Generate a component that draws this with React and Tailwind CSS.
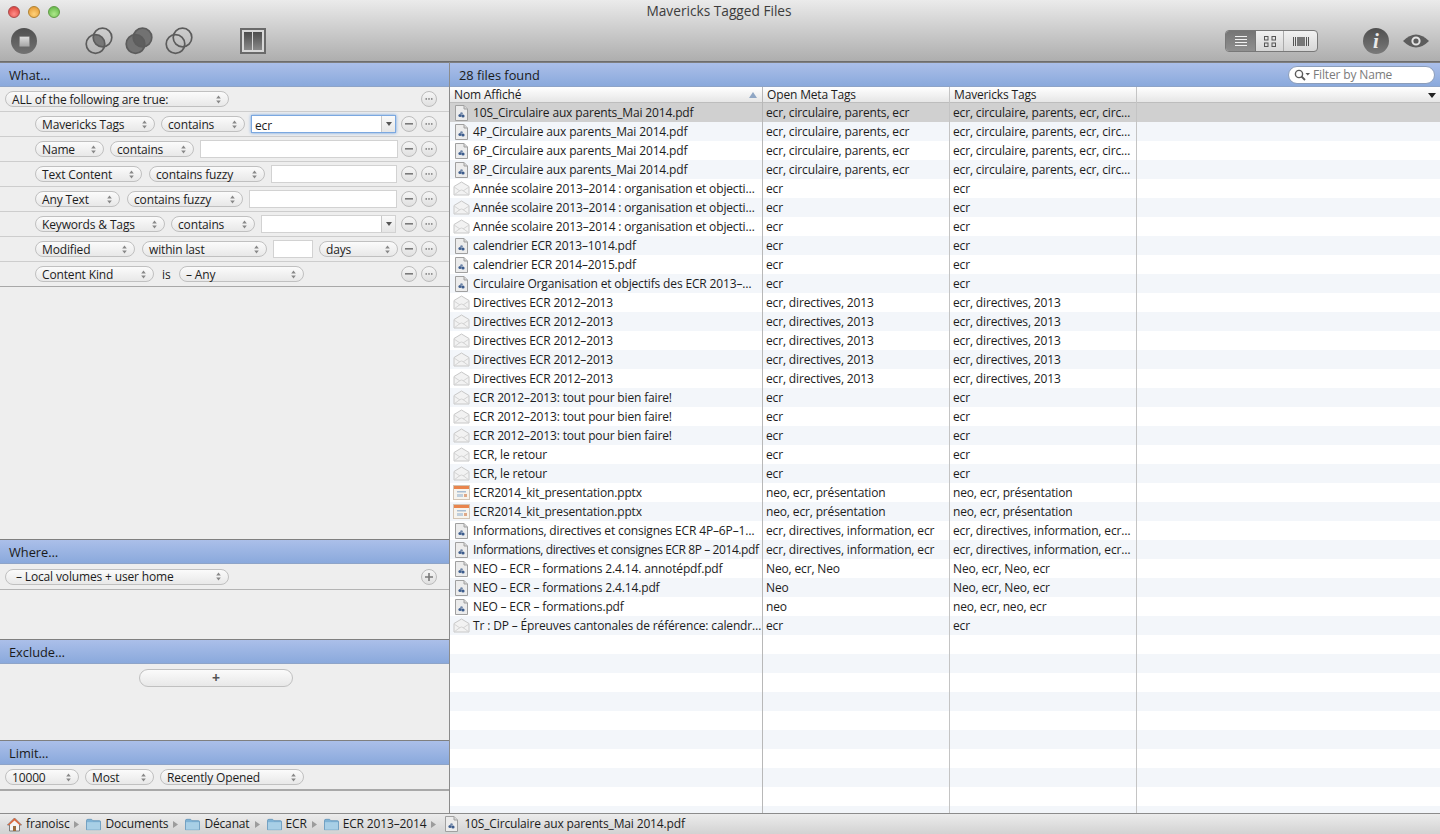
import React from 'react';

const FONT = "font-['Open_Sans',sans-serif]";
const TXT = "text-[12px] tracking-[-0.15px] leading-[14px] text-[#1c1c1c]";

const files = [
  ['pdf', '10S_Circulaire aux parents_Mai 2014.pdf', 'ecr, circulaire, parents, ecr', 'ecr, circulaire, parents, ecr, circ…'],
  ['pdf', '4P_Circulaire aux parents_Mai 2014.pdf', 'ecr, circulaire, parents, ecr', 'ecr, circulaire, parents, ecr, circ…'],
  ['pdf', '6P_Circulaire aux parents_Mai 2014.pdf', 'ecr, circulaire, parents, ecr', 'ecr, circulaire, parents, ecr, circ…'],
  ['pdf', '8P_Circulaire aux parents_Mai 2014.pdf', 'ecr, circulaire, parents, ecr', 'ecr, circulaire, parents, ecr, circ…'],
  ['mail', 'Année scolaire 2013–2014 : organisation et objecti…', 'ecr', 'ecr'],
  ['mail', 'Année scolaire 2013–2014 : organisation et objecti…', 'ecr', 'ecr'],
  ['mail', 'Année scolaire 2013–2014 : organisation et objecti…', 'ecr', 'ecr'],
  ['pdf', 'calendrier ECR 2013–1014.pdf', 'ecr', 'ecr'],
  ['pdf', 'calendrier ECR 2014–2015.pdf', 'ecr', 'ecr'],
  ['pdf', 'Circulaire Organisation et objectifs des ECR 2013–…', 'ecr', 'ecr'],
  ['mail', 'Directives ECR 2012–2013', 'ecr, directives, 2013', 'ecr, directives, 2013'],
  ['mail', 'Directives ECR 2012–2013', 'ecr, directives, 2013', 'ecr, directives, 2013'],
  ['mail', 'Directives ECR 2012–2013', 'ecr, directives, 2013', 'ecr, directives, 2013'],
  ['mail', 'Directives ECR 2012–2013', 'ecr, directives, 2013', 'ecr, directives, 2013'],
  ['mail', 'Directives ECR 2012–2013', 'ecr, directives, 2013', 'ecr, directives, 2013'],
  ['mail', 'ECR 2012–2013: tout pour bien faire!', 'ecr', 'ecr'],
  ['mail', 'ECR 2012–2013: tout pour bien faire!', 'ecr', 'ecr'],
  ['mail', 'ECR 2012–2013: tout pour bien faire!', 'ecr', 'ecr'],
  ['mail', 'ECR, le retour', 'ecr', 'ecr'],
  ['mail', 'ECR, le retour', 'ecr', 'ecr'],
  ['ppt', 'ECR2014_kit_presentation.pptx', 'neo, ecr, présentation', 'neo, ecr, présentation'],
  ['ppt', 'ECR2014_kit_presentation.pptx', 'neo, ecr, présentation', 'neo, ecr, présentation'],
  ['pdf', 'Informations, directives et consignes ECR 4P–6P–1…', 'ecr, directives, information, ecr', 'ecr, directives, information, ecr…'],
  ['pdf', 'Informations, directives et consignes ECR 8P – 2014.pdf', 'ecr, directives, information, ecr', 'ecr, directives, information, ecr…'],
  ['pdf', 'NEO – ECR – formations 2.4.14. annotépdf.pdf', 'Neo, ecr, Neo', 'Neo, ecr, Neo, ecr'],
  ['pdf', 'NEO – ECR – formations 2.4.14.pdf', 'Neo', 'Neo, ecr, Neo, ecr'],
  ['pdf', 'NEO – ECR – formations.pdf', 'neo', 'neo, ecr, neo, ecr'],
  ['mail', 'Tr : DP – Épreuves cantonales de référence: calendr…', 'ecr', 'ecr'],
];

function FileIcon({ kind }) {
  if (kind === 'mail') {
    return (
      <svg width="17" height="15" viewBox="0 0 17 15" className="shrink-0">
        <path d="M1 5.5 L8.5 1 L16 5.5 V14 H1 Z" fill="#f2f2f2" stroke="#c8c8c8" />
        <path d="M1 6 L7 10 M16 6 L10 10 M1 14 L7 9.5 Q8.5 8.5 10 9.5 L16 14" fill="none" stroke="#d4d4d4" />
      </svg>
    );
  }
  if (kind === 'ppt') {
    return (
      <svg width="17" height="15" viewBox="0 0 17 15" className="shrink-0">
        <rect x="0.5" y="0.5" width="16" height="14" fill="#f7f4ee" stroke="#d3c4b4" />
        <rect x="1" y="1" width="15" height="3" fill="#e9854d" />
        <rect x="4" y="6" width="9" height="1.5" fill="#a9bdd2" />
        <rect x="4" y="9" width="6" height="3" fill="#c0cfdd" />
        <rect x="11" y="9" width="3" height="3" fill="#dfa988" />
      </svg>
    );
  }
  return (
    <svg width="13" height="16" viewBox="0 0 13 16" className="shrink-0 ml-[2px] mr-[2px]">
      <path d="M0.5 0.5 H9 L12.5 4 V15.5 H0.5 Z" fill="#ececec" stroke="#a0a0a0" />
      <path d="M9 0.5 V4 H12.5" fill="#d6d6d6" stroke="#a0a0a0" />
      <circle cx="5" cy="10.5" r="1.6" fill="#41608f" />
      <circle cx="8" cy="11" r="1.6" fill="#3b5b8c" />
      <circle cx="6.5" cy="8.5" r="1.3" fill="#6f86a8" />
    </svg>
  );
}

function Updown() {
  return (
    <svg width="5" height="9" viewBox="0 0 5 9" className="shrink-0">
      <path d="M2.5 0.5 L4.8 3.5 H0.2 Z M2.5 8.5 L4.8 5.5 H0.2 Z" fill="#888" />
    </svg>
  );
}

function Pill({ w, label, ml = '', pl = 'pl-[6px]' }) {
  return (
    <div className={`${w} ${ml} ${pl} ${TXT} h-[16px] shrink-0 rounded-full border border-[#c0c0c0] bg-gradient-to-b from-[#fbfbfb] to-[#e8e8e8] flex items-center justify-between pr-[7px]`}>
      <span className="whitespace-nowrap pt-[1px]">{label}</span>
      <Updown />
    </div>
  );
}

function Field({ w, ml, value, combo, focus }) {
  return (
    <div className={`${w} ${ml} ${TXT} h-[18px] shrink-0 bg-white flex items-center ${focus ? 'border border-[#7ba8e0] shadow-[0_0_3px_#6b9ee0]' : 'border border-[#d2d2d2]'}`}>
      <span className="flex-1 pl-[3px] pt-[3px]">{value}</span>
      {combo && (
        <span className="w-[14px] h-full border-l border-[#c8c8c8] bg-gradient-to-b from-[#fafafa] to-[#e6e6e6] flex items-center justify-center">
          <svg width="6" height="4" viewBox="0 0 6 4"><path d="M0 0 H6 L3 4 Z" fill="#555" /></svg>
        </span>
      )}
    </div>
  );
}

function RoundBtn({ glyph, className = '' }) {
  return (
    <div className={`w-[16px] h-[16px] shrink-0 rounded-full border border-[#bcbcbc] bg-gradient-to-b from-[#f6f6f6] to-[#e0e0e0] flex items-center justify-center ${className}`}>
      <svg width="10" height="10" viewBox="0 0 10 10">
        {glyph === 'minus' && <rect x="1" y="4" width="8" height="1.6" fill="#7a7a7a" />}
        {glyph === 'more' && (
          <g fill="#7a7a7a">
            <rect x="1.5" y="4.2" width="1.5" height="1.5" />
            <rect x="4.25" y="4.2" width="1.5" height="1.5" />
            <rect x="7" y="4.2" width="1.5" height="1.5" />
          </g>
        )}
        {glyph === 'plus' && <path d="M1 4.2 H4.2 V1 H5.8 V4.2 H9 V5.8 H5.8 V9 H4.2 V5.8 H1 Z" fill="#7a7a7a" />}
      </svg>
    </div>
  );
}

function CriteriaRow({ children, last, controls = true }) {
  return (
    <div className={`h-[25px] pl-[35px] flex items-center border-b ${last ? 'border-[#a8a8a8]' : 'border-[#cdcdcd]'}`}>
      {children}
      <div className="ml-auto pr-[12px] flex gap-[4px]">
        {controls && <RoundBtn glyph="minus" />}
        <RoundBtn glyph="more" />
      </div>
    </div>
  );
}

function SectionHeader({ title }) {
  return (
    <div className="h-[25px] shrink-0 border-t border-[#7f7f7f] border-b border-b-[#8ea4c8] bg-gradient-to-b from-[#abbfe9] to-[#8aa9dc] pl-[9px] pt-[1px] flex items-center text-[12.8px] text-[#1a1a1a] leading-[16px]">
      {title}
    </div>
  );
}

function Circles({ fill }) {
  const lens = 'M8.57 7.9 A9.3 9.3 0 0 1 19.43 19.6 A9.3 9.3 0 0 1 8.57 7.9 Z';
  return (
    <svg width="28" height="28" viewBox="0 0 28 28">
      {fill === 'all' && <circle cx="10.5" cy="17" r="9.3" fill="#727272" />}
      {fill === 'all' && <circle cx="17.5" cy="10.5" r="9.3" fill="#727272" />}
      {fill === 'all' && <path d={lens} fill="#5e5e5e" />}
      {fill === 'mid' && <path d={lens} fill="#777" />}
      <circle cx="10.5" cy="17" r="9.3" fill="none" stroke="#5c5c5c" strokeWidth="1.7" />
      <circle cx="17.5" cy="10.5" r="9.3" fill="none" stroke="#5c5c5c" strokeWidth="1.7" />
    </svg>
  );
}

function Toolbar() {
  return (
    <div className="h-[62px] shrink-0 border-b border-[#6d6d6d] bg-gradient-to-b from-[#ebebeb] to-[#aeaeae] flex flex-col">
      <div className="h-[22px] flex items-center">
        <div className="flex gap-[8px] pl-[8px] pt-[1px]">
          <span className="w-[12px] h-[12px] rounded-full border border-[#a94a4a] bg-[radial-gradient(circle_at_50%_70%,#ff8f8a,#d6332e)]" />
          <span className="w-[12px] h-[12px] rounded-full border border-[#b08230] bg-[radial-gradient(circle_at_50%_70%,#ffd27a,#e0912a)]" />
          <span className="w-[12px] h-[12px] rounded-full border border-[#5f9a45] bg-[radial-gradient(circle_at_50%_70%,#aee88a,#58b03e)]" />
        </div>
        <div className="flex-1 text-center pr-[62px] text-[13.7px] text-[#3c3c3c] leading-[18px]">Mavericks Tagged Files</div>
      </div>
      <div className="flex-1 flex items-center pl-[11px] pr-[11px] pb-[1px]">
        <div className="w-[26px] h-[26px] rounded-full bg-gradient-to-b from-[#505050] to-[#727272] flex items-center justify-center">
          <span className="w-[11px] h-[11px] rounded-[1px] bg-gradient-to-b from-[#dcdcdc] to-[#a8a8a8] border border-[#8a8a8a]" />
        </div>
        <div className="ml-[48px] flex gap-[12px]">
          <Circles fill="mid" />
          <Circles fill="all" />
          <Circles fill="none" />
        </div>
        <div className="ml-[47px] w-[26px] h-[26px] border-[2px] border-[#6a6a6a] bg-[#d8d8d8] flex gap-[1px] p-[2px]">
          <span className="w-[8px] bg-gradient-to-b from-[#4c4c4c] to-[#8a8a8a]" />
          <span className="flex-1 bg-gradient-to-b from-[#4c4c4c] to-[#8a8a8a]" />
        </div>
        <div className="ml-auto w-[93px] h-[22px] rounded-[4px] border border-[#787878] flex overflow-hidden bg-gradient-to-b from-[#f2f2f2] to-[#d6d6d6]">
          <div className="w-[30px] bg-gradient-to-b from-[#757575] to-[#8f8f8f] border-r border-[#777] flex items-center justify-center">
            <svg width="12" height="11" viewBox="0 0 12 11"><path d="M0 .5H12M0 3.5H12M0 6.5H12M0 9.5H12" stroke="#f1f1f1" /></svg>
          </div>
          <div className="w-[28px] border-r border-[#aaa] flex items-center justify-center">
            <svg width="12" height="11" viewBox="0 0 12 11" fill="none" stroke="#555">
              <rect x=".5" y=".5" width="3.5" height="3.5" /><rect x="8" y=".5" width="3.5" height="3.5" />
              <rect x=".5" y="7" width="3.5" height="3.5" /><rect x="8" y="7" width="3.5" height="3.5" />
            </svg>
          </div>
          <div className="flex-1 flex items-center justify-center">
            <svg width="16" height="11" viewBox="0 0 16 11">
              <path d="M.5 1V10M2.5 1V10" stroke="#555" />
              <rect x="4" y="1" width="8" height="9" fill="#777" />
              <path d="M13.5 1V10M15.5 1V10" stroke="#555" />
            </svg>
          </div>
        </div>
        <div className="ml-[45px] w-[26px] h-[26px] rounded-full bg-gradient-to-b from-[#4f4f4f] to-[#7a7a7a] flex items-center justify-center">
          <span className="font-['Liberation_Serif',serif] italic font-bold text-[21px] leading-[22px] text-[#e9e9e9]">i</span>
        </div>
        <svg width="26" height="14" viewBox="0 0 26 14" className="ml-[14px]">
          <path d="M0 7 Q13 -6 26 7 Q13 20 0 7 Z" fill="#5d5d5d" />
          <circle cx="13" cy="7" r="3.6" fill="none" stroke="#e4e4e4" strokeWidth="2" />
        </svg>
      </div>
    </div>
  );
}

function LeftPanel() {
  return (
    <div className="w-[450px] shrink-0 border-r border-[#8c8c8c] bg-[#eeeeee] flex flex-col">
      <SectionHeader title="What…" />
      <div className="h-[25px] pl-[5px] flex items-center border-b border-[#cdcdcd]">
        <Pill w="w-[224px]" label="ALL of the following are true:" />
        <div className="ml-auto pr-[12px]"><RoundBtn glyph="more" /></div>
      </div>
      <CriteriaRow>
        <Pill w="w-[120px]" label="Mavericks Tags" />
        <Pill w="w-[84px]" ml="ml-[6px]" label="contains" />
        <Field w="w-[145px]" ml="ml-[6px]" value="ecr" combo focus />
      </CriteriaRow>
      <CriteriaRow>
        <Pill w="w-[69px]" label="Name" />
        <Pill w="w-[84px]" ml="ml-[6px]" label="contains" />
        <Field w="w-[198px]" ml="ml-[6px]" />
      </CriteriaRow>
      <CriteriaRow>
        <Pill w="w-[107px]" label="Text Content" />
        <Pill w="w-[116px]" ml="ml-[7px]" label="contains fuzzy" />
        <Field w="w-[126px]" ml="ml-[6px]" />
      </CriteriaRow>
      <CriteriaRow>
        <Pill w="w-[85px]" label="Any Text" />
        <Pill w="w-[116px]" ml="ml-[7px]" label="contains fuzzy" />
        <Field w="w-[148px]" ml="ml-[6px]" />
      </CriteriaRow>
      <CriteriaRow>
        <Pill w="w-[130px]" label="Keywords & Tags" />
        <Pill w="w-[84px]" ml="ml-[6px]" label="contains" />
        <Field w="w-[135px]" ml="ml-[6px]" combo />
      </CriteriaRow>
      <CriteriaRow>
        <Pill w="w-[100px]" label="Modified" />
        <Pill w="w-[125px]" ml="ml-[7px]" label="within last" />
        <Field w="w-[40px]" ml="ml-[6px]" />
        <Pill w="w-[79px]" ml="ml-[6px]" label="days" />
      </CriteriaRow>
      <CriteriaRow last>
        <Pill w="w-[119px]" label="Content Kind" />
        <span className={`${TXT} ml-[8px] w-[17px] pt-[1px]`}>is</span>
        <Pill w="w-[125px]" label="– Any" />
      </CriteriaRow>
      <div className="flex-1" />
      <SectionHeader title="Where…" />
      <div className="h-[26px] pl-[5px] flex items-center border-b border-[#b4b4b4]">
        <Pill w="w-[224px]" pl="pl-[10px]" label="– Local volumes + user home" />
        <div className="ml-auto pr-[12px]"><RoundBtn glyph="plus" /></div>
      </div>
      <div className="h-[49px]" />
      <SectionHeader title="Exclude…" />
      <div className="h-[76px] pt-[5px] flex justify-center">
        <div className="w-[154px] h-[18px] ml-[-17px] rounded-full border border-[#c0c0c0] bg-gradient-to-b from-[#fbfbfb] to-[#e8e8e8] flex items-center justify-center text-[14px] font-bold leading-[16px] text-[#555]">+</div>
      </div>
      <SectionHeader title="Limit…" />
      <div className="h-[26px] pl-[5px] flex items-center border-b-[2px] border-[#a8a8a8]">
        <Pill w="w-[74px]" label="10000" />
        <Pill w="w-[69px]" ml="ml-[6px]" label="Most" />
        <Pill w="w-[144px]" ml="ml-[6px]" label="Recently Opened" />
      </div>
      <div className="h-[22px]" />
    </div>
  );
}

function FileRow({ file, index }) {
  const [kind, name, meta, tags] = file;
  const bg = index === 0 ? 'bg-[#d0d0d0]' : index % 2 === 1 ? 'bg-[#f3f6fa]' : 'bg-white';
  // the one long untruncated name has to fit its column
  const nameFit = name.length > 52 ? 'tracking-[-0.41px]' : '';
  return (
    <div className={`${TXT} h-[19px] flex items-center ${bg}`}>
      <div className="w-[312px] shrink-0 pl-[3px] flex items-center gap-[3px]">
        <FileIcon kind={kind} />
        <span className={`whitespace-nowrap ${nameFit}`}>{name}</span>
      </div>
      <div className="w-[187px] shrink-0 pl-[4px] whitespace-nowrap">{meta}</div>
      <div className="w-[187px] shrink-0 pl-[4px] whitespace-nowrap">{tags}</div>
    </div>
  );
}

function RightPanel() {
  const stripes = Array.from({ length: 10 }, (_, i) => i);
  return (
    <div className="flex-1 min-w-0 flex flex-col bg-white">
      <div className="h-[25px] shrink-0 border-t border-[#7f7f7f] border-b border-b-[#8ea4c8] bg-gradient-to-b from-[#abbfe9] to-[#8aa9dc] pl-[9px] pr-[5px] flex items-center justify-between text-[12.8px] leading-[16px] text-[#1a1a1a]">
        <span className="pt-[1px]">28 files found</span>
        <div className="w-[147px] h-[18px] rounded-full border border-[#8b9dba] bg-white flex items-center pl-[5px] gap-[3px] text-[12px] tracking-[-0.15px] leading-[14px] text-[#7b7b7b]">
          <svg width="16" height="12" viewBox="0 0 16 12" className="shrink-0">
            <circle cx="5" cy="5" r="3.6" fill="none" stroke="#5a5a5a" strokeWidth="1.4" />
            <path d="M7.5 7.5 L11 11" stroke="#5a5a5a" strokeWidth="1.8" />
            <path d="M11.5 4 H16 L13.75 6.5 Z" fill="#5a5a5a" />
          </svg>
          <span className="pt-[1px]">Filter by Name</span>
        </div>
      </div>
      <div className="relative flex-1 min-h-0 overflow-hidden">
        <div className={`${TXT} h-[16px] pt-[1px] flex items-center border-b border-[#bdbdbd] bg-gradient-to-b from-[#ffffff] to-[#e6e6e6]`}>
          <div className="w-[312px] shrink-0 pl-[4px] pr-[5px] flex items-center justify-between">
            <span>Nom Affiché</span>
            <svg width="8" height="6" viewBox="0 0 8 6"><path d="M4 0 L8 6 H0 Z" fill="#8fa6c4" /></svg>
          </div>
          <div className="w-[187px] shrink-0 pl-[5px]">Open Meta Tags</div>
          <div className="w-[187px] shrink-0 pl-[5px]">Mavericks Tags</div>
          <div className="flex-1 flex justify-end">
            <div className="w-[16px] flex justify-center">
              <svg width="8" height="5" viewBox="0 0 8 5"><path d="M0 0 H8 L4 5 Z" fill="#222" /></svg>
            </div>
          </div>
        </div>
        {files.map((file, i) => <FileRow key={i} file={file} index={i} />)}
        {stripes.map(i => (
          <div key={i} className={`h-[19px] ${i % 2 === 0 ? 'bg-white' : 'bg-[#f3f6fa]'}`} />
        ))}
        {/* column separators over the rows */}
        <span className="absolute top-0 bottom-0 left-[312px] w-px bg-[#b8b8b8]" />
        <span className="absolute top-0 bottom-0 left-[499px] w-px bg-[#c4c4c4]" />
        <span className="absolute top-0 bottom-0 left-[686px] w-px bg-[#c4c4c4]" />
      </div>
    </div>
  );
}

function Crumb({ children, icon, arrow = true }) {
  return (
    <div className="flex items-center shrink-0">
      {icon}
      <span className="ml-[4px] whitespace-nowrap">{children}</span>
      {arrow && (
        <svg width="5" height="7" viewBox="0 0 5 7" className="ml-[5px] mr-[7px]"><path d="M0 0 L5 3.5 L0 7 Z" fill="#9c9c9c" /></svg>
      )}
    </div>
  );
}

const Folder = () => (
  <svg width="15" height="13" viewBox="0 0 16 13">
    <path d="M.5 2.5 Q.5 1 2 1 H6 L7.5 2.5 H14.5 Q15.5 2.5 15.5 3.5 V12 H.5 Z" fill="#7fb2d4" stroke="#6b9bbd" />
    <rect x="1" y="4" width="14" height="8" fill="#a8cfe6" />
  </svg>
);

const Home = () => (
  <svg width="15" height="15" viewBox="0 0 15 15">
    <path d="M7.5 1 L14.5 8 H12.5 V14 H2.5 V8 H.5 Z" fill="#f4f4f4" stroke="#7d7d7d" />
    <path d="M7.5 1 L14.5 8 H12.5 L7.5 3.5 L2.5 8 H.5 Z" fill="#d9663c" />
    <rect x="6" y="9" width="3" height="5" fill="#9a6a3c" />
  </svg>
);

export default function App() {
  return (
    <div className={`${FONT} w-[1440px] h-[834px] overflow-hidden flex flex-col bg-white`}>
      <Toolbar />
      <div className="flex-1 min-h-0 flex">
        <LeftPanel />
        <RightPanel />
      </div>
      <div className={`${TXT} h-[21px] shrink-0 border-t border-[#8c8c8c] bg-gradient-to-b from-[#ececec] to-[#d2d2d2] pl-[7px] flex items-center`}>
        <Crumb icon={<Home />}>franoisc</Crumb>
        <Crumb icon={<Folder />}>Documents</Crumb>
        <Crumb icon={<Folder />}>Décanat</Crumb>
        <Crumb icon={<Folder />}>ECR</Crumb>
        <Crumb icon={<Folder />}>ECR 2013–2014</Crumb>
        <Crumb icon={<FileIcon kind="pdf" />} arrow={false}>10S_Circulaire aux parents_Mai 2014.pdf</Crumb>
      </div>
    </div>
  );
}
